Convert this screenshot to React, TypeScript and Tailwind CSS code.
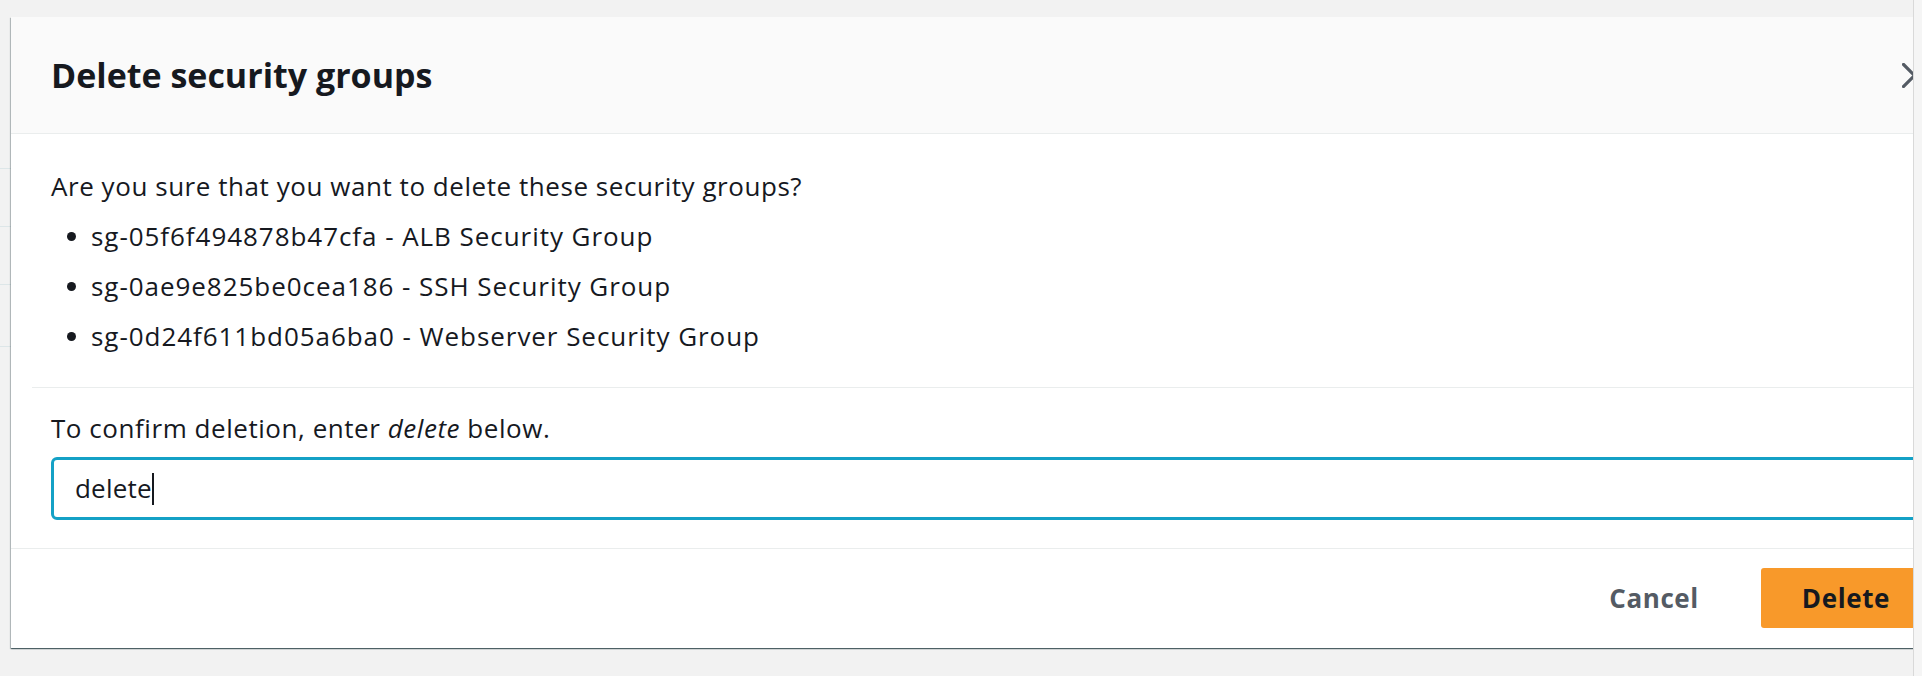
const groups = [
  { id: "sg-05f6f494878b47cfa", name: "ALB Security Group" },
  { id: "sg-0ae9e825be0cea186", name: "SSH Security Group" },
  { id: "sg-0d24f611bd05a6ba0", name: "Webserver Security Group" },
];

function BackgroundTable() {
  return (
    <div className="pt-[168px]">
      <div className="border-t border-[#dde6e8]" />
      <div className="h-[58px] border-b border-[#dde6e8]" />
      <div className="h-[58px] border-b border-[#dde6e8]" />
      <div className="h-[62px] border-b border-[#dde6e8]" />
    </div>
  );
}

function CloseIcon() {
  return (
    <svg width="25" height="25" viewBox="0 0 25 25" className="shrink-0 text-[#545b64]">
      <path d="M1.5 1.5 L23.5 23.5 M23.5 1.5 L1.5 23.5" stroke="currentColor" strokeWidth="3.2" strokeLinecap="square" fill="none" />
    </svg>
  );
}

function DeleteModal() {
  return (
    <div className="absolute left-[11px] top-[17px] w-[1956px] bg-white text-[#16191f] shadow-[0_1px_1px_0_rgba(0,28,36,0.5),1px_1px_1px_0_rgba(0,28,36,0.2),-1px_1px_1px_0_rgba(0,28,36,0.2)]">
      <div className="flex h-[117px] items-center justify-between border-b border-[#eaeded] bg-[#fafafa] pl-[40px] pr-[40px]">
        <h2 className="text-[34px] font-bold leading-none">Delete security groups</h2>
        <CloseIcon />
      </div>

      <div className="px-[21px]">
        <div className="pb-[26px] pl-[19px] pt-[27px] text-[26px] leading-[50px] tracking-[0.55px]">
          <p>Are you sure that you want to delete these security groups?</p>
          <ul className="tracking-[0.95px]">
            {groups.map((g) => (
              <li key={g.id} className="flex items-center">
                <span className="ml-[16px] mr-[15px] size-[9px] rounded-full bg-[#16191f]" />
                {g.id} - {g.name}
              </li>
            ))}
          </ul>
        </div>
        <div className="border-t border-[#eaeded]" />
      </div>

      <div className="px-[40px] pb-[28px] pt-[15px] text-[26px] tracking-[0.55px]">
        <p className="leading-[50px]">
          To confirm deletion, enter <em>delete</em> below.
        </p>
        <div className="mt-[4px] flex h-[63px] items-center rounded-[6px] border-[3px] border-[#14a1c6] pl-[21px] tracking-[0.2px]">
          <span>delete</span>
          <span className="h-[32px] w-[2px] bg-[#16191f]" />
        </div>
      </div>

      <div className="flex h-[100px] items-start justify-end gap-[62px] border-t border-[#eaeded] pl-[40px] pr-[36px] pt-[19px] text-[26px] font-bold tracking-[0.6px]">
        <button type="button" className="flex h-[60px] items-center text-[#545b64]">
          Cancel
        </button>
        <button
          type="button"
          className="flex h-[60px] items-center rounded-[3px] bg-[#f8992a] px-[41px] text-[#16191f]"
        >
          Delete
        </button>
      </div>
    </div>
  );
}

export default function App() {
  return (
    <div className="flex h-[676px] w-[1922px] overflow-hidden bg-[#f2f2f2] font-['Open_Sans',sans-serif]">
      <div className="relative w-[1913px] overflow-hidden">
        <BackgroundTable />
        <DeleteModal />
      </div>
      <div className="w-[9px] border-l border-[#d9d9d9] bg-[#f5f5f5]" />
    </div>
  );
}
